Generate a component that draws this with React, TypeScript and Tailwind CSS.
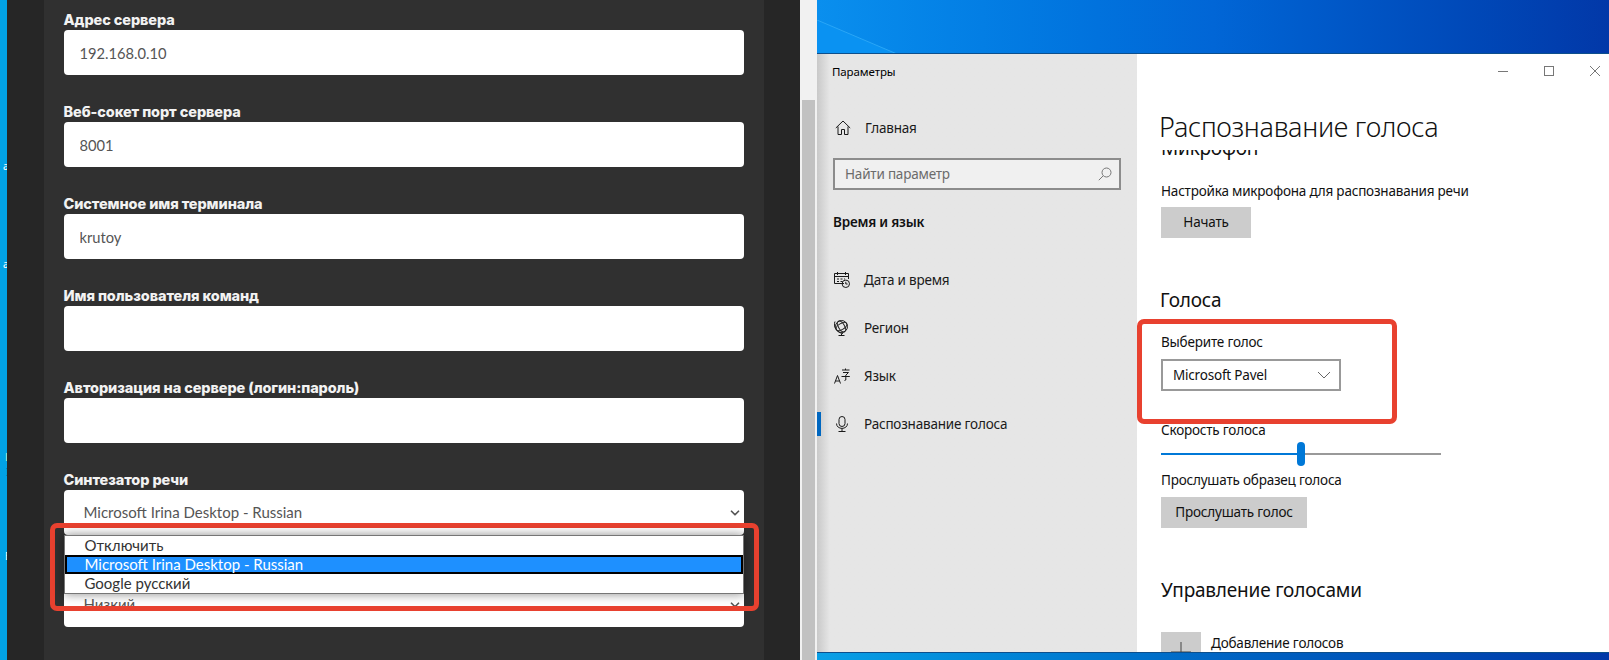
import { ChevronDown } from "lucide-react";

const lato = "font-['Lato','Noto_Sans',sans-serif]";
const labelText = "h-[22px] font-['Inter',sans-serif] text-[14.5px] leading-[24px] font-extrabold tracking-[-0.1px] text-[#f2f2f2]";
const bodyText = "text-[13.5px] tracking-[-0.2px]";
const headingText = "text-[19px] leading-[28px] tracking-[-0.2px]";

function Field({ label, value }: { label: string; value?: string }) {
  return (
    <div className="mb-[25px]">
      <div className={labelText}>{label}</div>
      <input
        readOnly
        defaultValue={value}
        className={`block h-[45px] w-[680px] rounded-[4px] bg-white px-[16px] text-[14.7px] text-[#555] outline-none ${lato}`}
      />
    </div>
  );
}

function SelectBox({ value, children }: { value: string; children?: React.ReactNode }) {
  return (
    <div className="relative flex h-[45px] w-[680px] items-center rounded-[4px] bg-white pr-[2px] pl-[20px]">
      <span className={`flex-1 text-[15px] text-[#555] ${lato}`}>{value}</span>
      <ChevronDown size={14} strokeWidth={3} className="text-[#555]" />
      {children}
    </div>
  );
}

function SynthesizerPopup() {
  return (
    <div className={`absolute top-full left-0 z-10 w-[680px] border border-[#767676] bg-white text-[15px] leading-[19px] text-[#333] shadow-[0_0_10px_rgba(0,0,0,0.45)] ${lato}`}>
      <div className="h-[19px] pl-[20px]">Отключить</div>
      <div className="h-[19px] border-2 border-black bg-[#1e90ff] pl-[18px] leading-[15px] text-white">
        Microsoft Irina Desktop - Russian
      </div>
      <div className="h-[19px] pl-[20px]">Google русский</div>
    </div>
  );
}

function NavItem({ icon, label, active }: { icon: React.ReactNode; label: string; active?: boolean }) {
  return (
    <div className="relative flex h-[48px] items-center pl-[17px]">
      {active && <div className="absolute top-[12px] left-0 h-[24px] w-[4px] bg-[#0067c0]" />}
      <div className="flex w-[30px] justify-start">{icon}</div>
      <span className={`${bodyText} text-[#1a1a1a]`}>{label}</span>
    </div>
  );
}

const iconProps = {
  width: 16,
  height: 16,
  viewBox: "0 0 16 16",
  fill: "none",
  stroke: "#1a1a1a",
  strokeWidth: 1,
};

const HomeIcon = () => (
  <svg {...iconProps}>
    <path d="M0.8 8 L8 1 L15.2 8 M3 6.5 V14.5 H6.5 V9.5 H9.5 V14.5 H13 V6.5" />
  </svg>
);
const SearchIcon = () => (
  <svg width="14" height="14" viewBox="0 0 14 14" fill="none" stroke="#777" strokeWidth="1">
    <circle cx="8.5" cy="5.5" r="4.5" />
    <path d="M5.2 8.8 L0.8 13.2" />
  </svg>
);
const CalendarIcon = () => (
  <svg {...iconProps}>
    <path d="M10 11.5 H0.5 V1.5 H14.5 V7" />
    <path d="M0.5 4.5 H14.5 M3.5 0 V3 M11.5 0 V3" />
    <path d="M3 7 H5 M6.5 7 H8.5 M10 7 H11 M3 9.5 H5 M6.5 9.5 H8.5" />
    <circle cx="11.8" cy="11.8" r="3.7" />
    <path d="M11.8 9.8 V12 H13.6" />
  </svg>
);
const GlobeIcon = () => (
  <svg {...iconProps}>
    <circle cx="7.5" cy="6.5" r="6" />
    <ellipse cx="7.5" cy="6.5" rx="3" ry="6" transform="rotate(-30 7.5 6.5)" />
    <ellipse cx="7.5" cy="6.5" rx="6" ry="3" transform="rotate(-30 7.5 6.5)" />
    <path d="M1 1.5 C-1 6 2 12.5 9 13.5 M7.5 13.5 V15.5 M4.5 15.5 H10.5" />
  </svg>
);
const LanguageIcon = () => (
  <svg {...iconProps}>
    <path d="M0.5 15.5 L3.5 7.5 L6.5 15.5 M1.6 13 H5.4" />
    <path d="M8 2 H15.5 M9 4.5 H14.5 L12 7 M7.5 8.5 H15.8 M11.8 7 V12 L10.5 12.5 M11.5 0.5 V2" />
  </svg>
);
const MicIcon = () => (
  <svg {...iconProps}>
    <rect x="5" y="0.5" width="6" height="10" rx="3" />
    <path d="M2.5 7.5 C2.5 14 13.5 14 13.5 7.5 M8 12.5 V15.5 M4.5 15.5 H11.5" />
  </svg>
);

export default function App() {
  return (
    <div className="relative flex h-[660px] w-[1609px] overflow-hidden bg-white font-['Noto_Sans',sans-serif]">
      {/* край рабочего стола */}
      <div className="relative w-[7px] shrink-0 overflow-hidden bg-[#01a2e6] text-[10px] leading-none text-white">
        <span className="absolute top-[161px] left-[3px]">a</span>
        <span className="absolute top-[259px] left-[3px]">a</span>
        <span className="absolute top-[452px] left-[5px] text-[#b5f0d8]">L</span>
        <span className="absolute top-[467px] left-[6px] text-[#1b4fa0]">I</span>
        <span className="absolute top-[551px] left-[5px]">E</span>
      </div>

      {/* форма настроек */}
      <div className="flex w-[793px] shrink-0 justify-center bg-[#262626]">
        <div className="w-[720px] bg-[#303030] px-[20px] pt-[8px]">
          <Field label="Адрес сервера" value="192.168.0.10" />
          <Field label="Веб-сокет порт сервера" value="8001" />
          <Field label="Системное имя терминала" value="krutoy" />
          <Field label="Имя пользователя команд" />
          <Field label="Авторизация на сервере (логин:пароль)" />
          <div className={labelText}>Синтезатор речи</div>
          <SelectBox value="Microsoft Irina Desktop - Russian">
            <SynthesizerPopup />
          </SelectBox>
          <div className="h-[47px]" />
          <SelectBox value="Низкий" />
        </div>
      </div>

      {/* скроллбар */}
      <div className="flex w-[17px] shrink-0 flex-col bg-[#f1f1f1] px-[2px] pt-[100px]">
        <div className="flex-1 bg-[#c1c1c1]" />
      </div>

      <div className="flex min-w-0 flex-1 flex-col">
        <div className="relative h-[54px] shrink-0 overflow-hidden border-b border-[#0d4f8c] bg-gradient-to-r from-[#0a8fee] via-[#0166d6] to-[#0238a8]">
          <svg className="absolute top-[20px] left-0" width="90" height="34" viewBox="0 0 90 34">
            <path d="M0 0 L80 34 H0 Z" fill="#0a92f2" />
            <path d="M0 0 L80 34" stroke="#2aa6f6" strokeWidth="1" fill="none" />
          </svg>
        </div>

        {/* окно параметров */}
        <div className="flex h-[598px] shrink-0">
          <div className="w-[320px] shrink-0 bg-gradient-to-r from-[#c9c9c9] from-0% to-[#e6e6e6] to-[4%] text-black">
            <div className="flex h-[28px] items-end pl-[15px] text-[11.5px] leading-[20px] tracking-[-0.1px]">Параметры</div>
            <div className="mt-[34px] flex h-[24px] items-center pl-[18px]">
              <div className="w-[30px]">
                <HomeIcon />
              </div>
              <span className={`${bodyText} text-[#1a1a1a]`}>Главная</span>
            </div>
            <div className={`mx-[16px] mt-[18px] flex h-[32px] items-center justify-between border-2 border-[#8c8c8c] bg-[#f0f0f0] pr-[7px] pl-[10px] text-[#6b6b6b] ${bodyText}`}>
              Найти параметр
              <SearchIcon />
            </div>
            <div className={`mt-[22px] pl-[16px] leading-[20px] font-semibold text-[#111] ${bodyText}`}>Время и язык</div>
            <div className="mt-[24px]">
              <NavItem icon={<CalendarIcon />} label="Дата и время" />
              <NavItem icon={<GlobeIcon />} label="Регион" />
              <NavItem icon={<LanguageIcon />} label="Язык" />
              <NavItem icon={<MicIcon />} label="Распознавание голоса" active />
            </div>
          </div>

          <div className="relative flex min-w-0 flex-1 flex-col bg-white text-[#111]">
            <div className="absolute top-[12px] right-[9px] flex items-center gap-[36px]">
              <svg width="10" height="10" viewBox="0 0 10 10" stroke="#777" fill="none">
                <path d="M0 5.5 H10" />
              </svg>
              <svg width="10" height="10" viewBox="0 0 10 10" stroke="#777" fill="none">
                <rect x="0.5" y="0.5" width="9" height="9" />
              </svg>
              <svg width="10" height="10" viewBox="0 0 10 10" stroke="#777" fill="none">
                <path d="M0 0 L10 10 M10 0 L0 10" />
              </svg>
            </div>

            <div className="h-[96px] shrink-0 pt-[53px] pl-[22px] text-[27px] leading-[40px] font-light tracking-[-0.3px]">
              Распознавание голоса
            </div>

            <div className="flex-1 overflow-hidden pl-[24px]">
              <div className={`-mt-[16px] ${headingText}`}>Микрофон</div>
              <div className={`mt-[19px] leading-[20px] ${bodyText}`}>Настройка микрофона для распознавания речи</div>
              <button className={`mt-[6px] flex h-[31px] w-[90px] items-center justify-center bg-[#cccccc] ${bodyText}`}>
                Начать
              </button>

              <div className={`mt-[48px] -ml-[1px] ${headingText}`}>Голоса</div>
              <div className={`mt-[18px] leading-[20px] ${bodyText}`}>Выберите голос</div>
              <div className={`mt-[7px] flex h-[32px] w-[180px] items-center justify-between border-2 border-[#999] pr-[8px] pl-[10px] ${bodyText}`}>
                Microsoft Pavel
                <svg width="14" height="8" viewBox="0 0 14 8" fill="none" stroke="#666">
                  <path d="M1 1 L7 7 L13 1" />
                </svg>
              </div>

              <div className={`mt-[29px] leading-[20px] ${bodyText}`}>Скорость голоса</div>
              <div className="mt-[2px] flex h-[24px] w-[280px] items-center">
                <div className="h-[2px] w-[136px] bg-[#0078d7]" />
                <div className="h-[24px] w-[8px] rounded-[4px] bg-[#0078d7]" />
                <div className="h-[2px] flex-1 bg-[#999]" />
              </div>

              <div className={`mt-[4px] leading-[20px] ${bodyText}`}>Прослушать образец голоса</div>
              <button className={`mt-[7px] flex h-[31px] w-[146px] items-center justify-center bg-[#cccccc] ${bodyText}`}>
                Прослушать голос
              </button>

              <div className={`mt-[48px] ${headingText}`}>Управление голосами</div>
              <div className="mt-[28px] flex gap-[10px]">
                <div className="flex h-[40px] w-[40px] items-center justify-center bg-[#cccccc]">
                  <svg width="20" height="20" viewBox="0 0 20 20" stroke="#444" strokeWidth="1">
                    <path d="M0 10 H20 M10 0 V20" />
                  </svg>
                </div>
                <span className={`pt-[1px] leading-[20px] ${bodyText}`}>Добавление голосов</span>
              </div>
            </div>
          </div>
        </div>

        <div className="h-[8px] shrink-0 border-t border-[#0d4f8c] bg-gradient-to-r from-[#0aa0e6] via-[#0166c4] to-[#0238a8]" />
      </div>

      {/* красные выделения поверх скриншота */}
      <div className="absolute top-[523px] left-[50px] h-[88px] w-[709px] rounded-[7px] border-[5px] border-[#e8412f]" />
      <div className="absolute top-[319px] left-[1137px] h-[105px] w-[260px] rounded-[7px] border-[5px] border-[#e8412f]" />
    </div>
  );
}
